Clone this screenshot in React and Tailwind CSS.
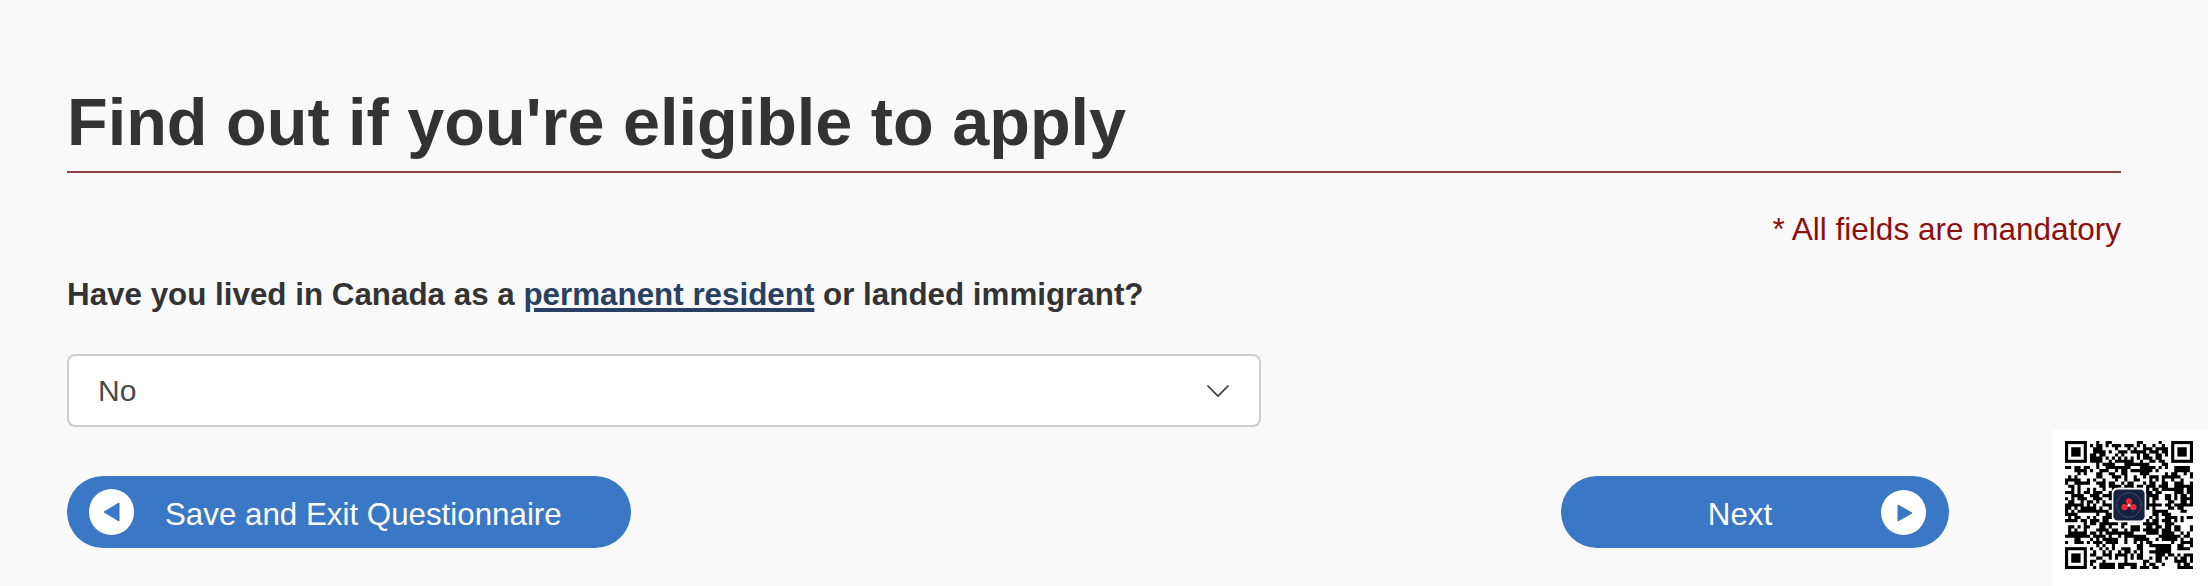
const QR_SIZE = 41;

function isFinder(x, y) {
    return (x < 8 && y < 8) || (x >= QR_SIZE - 8 && y < 8) || (x < 8 && y >= QR_SIZE - 8);
}

// seeded fill for the data area of the QR code
function buildQrPath() {
    let seed = 1337;
    let d = '';
    for (let y = 0; y < QR_SIZE; y++) {
        for (let x = 0; x < QR_SIZE; x++) {
            seed = (seed * 1103515245 + 12345) & 0x7fffffff;
            if (!isFinder(x, y) && (seed >> 16) % 100 < 54) {
                d += `M${x} ${y}h1v1h-1z`;
            }
        }
    }
    return d;
}

function Finder({ x, y }) {
    return (
        <g>
            <rect x={x + 0.5} y={y + 0.5} width="6" height="6" fill="none" stroke="#000" />
            <rect x={x + 2} y={y + 2} width="3" height="3" fill="#000" />
        </g>
    );
}

function QrCode() {
    return (
        <div className="absolute right-0 bottom-0 w-[156px] h-[156px] bg-white flex items-center justify-center">
            <svg width="128" height="128" viewBox="0 0 41 41" className="-mt-[6px] -ml-[2px]">
                <path d={buildQrPath()} fill="#000" />
                <Finder x={0} y={0} />
                <Finder x={34} y={0} />
                <Finder x={0} y={34} />
                <rect x="15" y="15" width="11" height="11" rx="1.5" fill="#fff" />
                <rect x="15.5" y="15.5" width="10" height="10" rx="1.4" fill="#16233f" />
                <circle cx="20.5" cy="20.5" r="3.9" fill="none" stroke="#5a6a88" strokeWidth="0.3" strokeDasharray="0.5 0.3" />
                <circle cx="20.5" cy="19.3" r="1" fill="#f0243a" />
                <circle cx="19.1" cy="21.2" r="1" fill="#f0243a" />
                <circle cx="21.9" cy="21.2" r="1" fill="#f0243a" />
                <circle cx="20.5" cy="20.6" r="0.5" fill="#ffd0d4" />
            </svg>
        </div>
    );
}

function ArrowDot({ direction, className }) {
    return (
        <span className={`bg-white rounded-full flex items-center justify-center shrink-0 ${className}`}>
            {direction === 'left' ? (
                <svg width="17" height="20" viewBox="0 0 17 20" className="-ml-[1px]">
                    <path d="M1 10 L16 1 V19 Z" fill="#3a77c4" stroke="#3a77c4" strokeWidth="1" strokeLinejoin="round" />
                </svg>
            ) : (
                <svg width="16" height="18" viewBox="0 0 16 18" className="ml-[2px]">
                    <path d="M15 9 L1 1 V17 Z" fill="#3a77c4" stroke="#3a77c4" strokeWidth="1" strokeLinejoin="round" />
                </svg>
            )}
        </span>
    );
}

export default function App() {
    return (
        <div className="relative h-[586px] bg-[#f9f9f9] overflow-hidden font-['Liberation_Sans',Arial,sans-serif]">
            <div className="pl-[67px] pr-[87px] pt-[84px]">
                <h1 className="text-[66.6px] leading-[76px] font-bold text-[#333333] pb-[11px] border-b-2 border-[#914244]">
                    Find out if you're eligible to apply
                </h1>
                <p className="mt-[36px] text-right text-[31.5px] leading-[40px] text-[#8b0f0f]">
                    * All fields are mandatory
                </p>
                <p className="mt-[26px] text-[31.35px] leading-[40px] font-bold text-[#333333]">
                    Have you lived in Canada as a{' '}
                    <a href="#" className="text-[#284162] underline decoration-[4px] underline-offset-[3px]">permanent resident</a>{' '}
                    or landed immigrant?
                </p>
                <div className="mt-[39px] w-[1194px] h-[73px] bg-white border-[2px] border-[#cccccc] rounded-[8px] pl-[29px] pr-[29px] flex items-center justify-between">
                    <span className="text-[30px] text-[#4a4a4a]">No</span>
                    <svg width="24" height="14" viewBox="0 0 24 14">
                        <path d="M1.5 1.5 L12 12 L22.5 1.5" fill="none" stroke="#333333" strokeWidth="1.6" />
                    </svg>
                </div>
                <div className="mt-[49px] flex justify-between pr-[172px]">
                    <button className="w-[564px] h-[72px] rounded-full bg-[#3a77c4] text-white text-[31.3px] pl-[22px] flex items-center">
                        <ArrowDot direction="left" className="w-[45px] h-[46px]" />
                        <span className="ml-[31px] pt-[6px]">Save and Exit Questionnaire</span>
                    </button>
                    <button className="relative w-[388px] h-[72px] rounded-full bg-[#3a77c4] text-white text-[31.3px] flex items-center justify-center">
                        <span className="-ml-[30px] pt-[6px]">Next</span>
                        <ArrowDot direction="right" className="absolute right-[23px] top-[14px] w-[45px] h-[45px]" />
                    </button>
                </div>
            </div>
            <QrCode />
        </div>
    );
}
